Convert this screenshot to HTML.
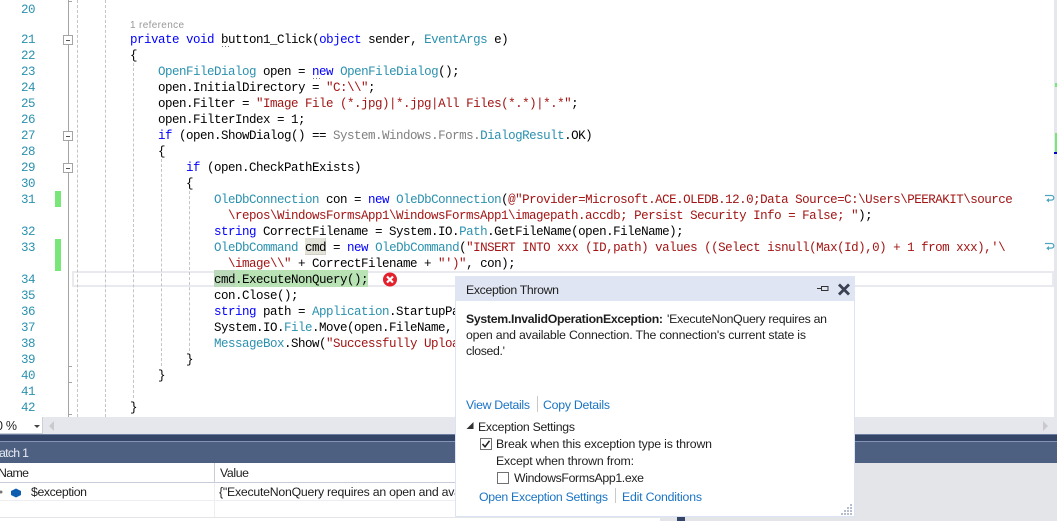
<!DOCTYPE html>
<html><head><meta charset="utf-8"><style>
html,body{margin:0;padding:0;background:#fff}
#r{position:relative;width:1057px;height:521px;overflow:hidden;background:#fff}
.a{position:absolute}
.l{position:absolute;margin-top:1px;height:16px;line-height:16px;white-space:pre;font-family:"Liberation Mono",monospace;font-size:12.5px;letter-spacing:-.5px;color:#000}
.n{position:absolute;margin-top:1px;left:0;width:35px;text-align:right;height:16px;line-height:16px;font-family:"Liberation Mono",monospace;font-size:12.5px;letter-spacing:-.5px;color:#2b91af}
.t{color:#2b91af}.k{color:#00f}.s{color:#a31515}.g{color:#808080}
.d{position:absolute;width:0;border-left:1px dashed #c4c4c4}
.b{position:absolute;left:63px;width:8px;height:8px;border:1px solid #a5a5a5;background:#fff}
.b:after{content:"";position:absolute;left:2px;top:3.5px;width:4px;height:1px;background:#555}
svg text{font-family:"Liberation Sans",sans-serif;font-size:12.3px;fill:#1e1e1e}
</style></head><body><div id="r">

<div class="a" style="left:72px;top:271px;width:978px;height:12px;border:2px solid #e9e9f0"></div>
<div class="a" style="left:214px;top:270px;width:21px;height:17px;background:#bcdabb"></div>
<div class="a" style="left:235px;top:270px;width:133px;height:17px;background:#b9e2b5"></div>
<div class="a" style="left:305px;top:238px;width:20px;height:16px;background:#e3e3d9;border:1px solid #cfcfc4;border-width:0 1px 1px 0"></div>

<div class="a" style="left:55px;top:191px;width:6px;height:16px;background:#78e678"></div>
<div class="a" style="left:55px;top:239px;width:6px;height:32px;background:#78e678"></div>
<div class="a" style="left:68px;top:0;width:1px;height:417px;background:#a5a5a5"></div>
<div class="a" style="left:68px;top:1px;width:4px;height:1px;background:#a5a5a5"></div>
<div class="a" style="left:68px;top:366px;width:4px;height:1px;background:#a5a5a5"></div>
<div class="a" style="left:68px;top:382px;width:4px;height:1px;background:#a5a5a5"></div>
<div class="a" style="left:68px;top:414px;width:4px;height:1px;background:#a5a5a5"></div>
<div class="b" style="top:35px"></div>
<div class="b" style="top:131px"></div>
<div class="b" style="top:163px"></div>

<div class="d" style="left:77px;top:0;height:417px"></div>
<div class="d" style="left:105px;top:0;height:417px"></div>
<div class="d" style="left:133px;top:63px;height:335px"></div>
<div class="d" style="left:161px;top:159px;height:207px"></div>
<div class="d" style="left:189px;top:191px;height:160px"></div>

<div class="n" style="top:1px">20</div>
<div class="n" style="top:31px">21</div>
<div class="n" style="top:47px">22</div>
<div class="n" style="top:63px">23</div>
<div class="n" style="top:79px">24</div>
<div class="n" style="top:95px">25</div>
<div class="n" style="top:111px">26</div>
<div class="n" style="top:127px">27</div>
<div class="n" style="top:143px">28</div>
<div class="n" style="top:159px">29</div>
<div class="n" style="top:175px">30</div>
<div class="n" style="top:191px">31</div>
<div class="n" style="top:223px">32</div>
<div class="n" style="top:239px">33</div>
<div class="n" style="top:271px">34</div>
<div class="n" style="top:287px">35</div>
<div class="n" style="top:303px">36</div>
<div class="n" style="top:319px">37</div>
<div class="n" style="top:335px">38</div>
<div class="n" style="top:351px">39</div>
<div class="n" style="top:367px">40</div>
<div class="n" style="top:383px">41</div>
<div class="n" style="top:399px">42</div>

<div class="l" style="left:130px;top:-15px">}</div>
<div class="l" style="left:130px;top:31px"><span class="k">private</span> <span class="k">void</span> button1_Click(<span class="k">object</span> sender, <span class="t">EventArgs</span> e)</div>
<div class="l" style="left:130px;top:47px">{</div>
<div class="l" style="left:158px;top:63px"><span class="t">OpenFileDialog</span> open = <span class="k">new</span> <span class="t">OpenFileDialog</span>();</div>
<div class="l" style="left:158px;top:79px">open.InitialDirectory = <span class="s">"C:\\"</span>;</div>
<div class="l" style="left:158px;top:95px">open.Filter = <span class="s">"Image File (*.jpg)|*.jpg|All Files(*.*)|*.*"</span>;</div>
<div class="l" style="left:158px;top:111px">open.FilterIndex = 1;</div>
<div class="l" style="left:158px;top:127px"><span class="k">if</span> (open.ShowDialog() == <span class="g">System.Windows.Forms.</span><span class="t">DialogResult</span>.OK)</div>
<div class="l" style="left:158px;top:143px">{</div>
<div class="l" style="left:186px;top:159px"><span class="k">if</span> (open.CheckPathExists)</div>
<div class="l" style="left:186px;top:175px">{</div>
<div class="l" style="left:214px;top:191px"><span class="t">OleDbConnection</span> con = <span class="k">new</span> <span class="t">OleDbConnection</span>(<span class="s">@"Provider=Microsoft.ACE.OLEDB.12.0;Data Source=C:\Users\PEERAKIT\source</span></div>
<div class="l" style="left:228px;top:207px"><span class="s">\repos\WindowsFormsApp1\WindowsFormsApp1\imagepath.accdb; Persist Security Info = False; "</span>);</div>
<div class="l" style="left:214px;top:223px"><span class="k">string</span> CorrectFilename = System.IO.<span class="t">Path</span>.GetFileName(open.FileName);</div>
<div class="l" style="left:214px;top:239px"><span class="t">OleDbCommand</span> cmd = <span class="k">new</span> <span class="t">OleDbCommand</span>(<span class="s">"INSERT INTO xxx (ID,path) values ((Select isnull(Max(Id),0) + 1 from xxx),'\</span></div>
<div class="l" style="left:228px;top:255px"><span class="s">\image\\"</span> + CorrectFilename + <span class="s">"')"</span>, con);</div>
<div class="l" style="left:214px;top:271px">cmd.ExecuteNonQuery();</div>
<div class="l" style="left:214px;top:287px">con.Close();</div>
<div class="l" style="left:214px;top:303px"><span class="k">string</span> path = <span class="t">Application</span>.StartupPath;</div>
<div class="l" style="left:214px;top:319px">System.IO.<span class="t">File</span>.Move(open.FileName, path);</div>
<div class="l" style="left:214px;top:335px"><span class="t">MessageBox</span>.Show(<span class="s">"Successfully Upload"</span>);</div>
<div class="l" style="left:186px;top:351px">}</div>
<div class="l" style="left:158px;top:367px">}</div>
<div class="l" style="left:130px;top:399px">}</div>

<div class="a" style="left:0;top:417px;width:1057px;height:17px;background:#e6e7ed"></div>
<div class="a" style="left:0;top:417px;width:42px;height:16px;background:#fff;border-bottom:1px solid #ccced8;border-right:1px solid #ccced8"></div>
<div class="a" style="left:1054px;top:0;width:3px;height:417px;background:#e6e7ed"></div>
<div class="a" style="left:1055px;top:83px;width:2px;height:4px;background:#78e678"></div>
<div class="a" style="left:1055px;top:133px;width:2px;height:19px;background:#78e678"></div>
<div class="a" style="left:1054px;top:152px;width:3px;height:2px;background:#0000d0"></div>

<div class="a" style="left:0;top:434px;width:1057px;height:7px;background:#344567;border-top:1px solid #6c7ea0;box-sizing:border-box"></div>
<div class="a" style="left:0;top:441px;width:1057px;height:22px;background:#4d6082;border-top:1px solid #8494b4;box-sizing:border-box"></div>
<div class="a" style="left:855px;top:463px;width:202px;height:58px;background:#e4e5e8"></div>
<div class="a" style="left:0;top:482px;width:660px;height:1px;background:#c8cbd8"></div>
<div class="a" style="left:0;top:500px;width:660px;height:1px;background:#eeeef2"></div>
<div class="a" style="left:214px;top:463px;width:1px;height:19px;background:#c8cbd8"></div>
<div class="a" style="left:214px;top:483px;width:1px;height:34px;background:#eeeef2"></div>
<div class="a" style="left:0;top:517px;width:660px;height:1px;background:#e4e5e8"></div>
<div class="a" style="left:660px;top:517px;width:397px;height:4px;background:#e4e5e8"></div>
<div class="a" style="left:677px;top:517px;width:8px;height:4px;background:#344567"></div>

<svg class="a" style="left:0;top:0" width="1057" height="521">
<text x="130" y="28" textLength="54" style="font-size:10px;fill:#999">1 reference</text>
<g fill="#777"><rect x="222" y="46" width="1" height="1"/><rect x="225" y="46" width="1" height="1"/><rect x="228" y="46" width="1" height="1"/><rect x="313" y="78" width="1" height="1"/><rect x="316" y="78" width="1" height="1"/><rect x="319" y="78" width="1" height="1"/></g>
<circle cx="390" cy="279.5" r="7" fill="#e3202c"/>
<path d="M387 276.5l6 6M393 276.5l-6 6" stroke="#fff" stroke-width="2.2"/>
<g fill="none" stroke="#4ea5c4" stroke-width="1.3"><path d="M1045 195.5h6.5a2.3 2.3 0 0 1 0 4.6h-4"/><path d="M1045 243.5h6.5a2.3 2.3 0 0 1 0 4.6h-4"/></g>
<path d="M1049 198v4.5l-2.8-2.2zM1049 246v4.5l-2.8-2.2z" fill="#4ea5c4"/>
<text x="-4" y="430" textLength="21" style="font-size:12.5px">0 %</text>
<path d="M34 425h6l-3 3z" fill="#444"/>
<path d="M54 421v10l-5-5z" fill="#c9c9ce"/>
<path d="M1043 421v10l5-5z" fill="#c9c9ce"/>
<text x="-1" y="457" textLength="30" style="fill:#e8ebf2">atch 1</text>
<text x="-2" y="477" textLength="31">Name</text>
<text x="220" y="477" textLength="29">Value</text>
<circle cx="1" cy="492" r="1.5" fill="#777"/>
<path d="M11 491l5-2.5 5 2.5v4l-5 2.5-5-2.5z" fill="#0f5fb0"/>
<text x="31" y="496" textLength="56">$exception</text>
<text x="219" y="496" textLength="242">{"ExecuteNonQuery requires an open and ava</text>
</svg>

<div class="a" style="left:455px;top:276px;width:400px;height:241px;background:#fff;border:1px solid #dbe3f5;box-sizing:border-box"></div>
<div class="a" style="left:455px;top:276px;width:400px;height:25px;background:#dfe5f2"></div>
<div class="a" style="left:537px;top:396px;width:1px;height:16px;background:#c9c9c9"></div>
<div class="a" style="left:615px;top:488px;width:1px;height:15px;background:#c9c9c9"></div>

<svg class="a" style="left:0;top:0" width="1057" height="521">
<text x="466" y="294" textLength="93">Exception Thrown</text>
<path d="M817 288.5h4M821.5 286.5h6.5v4h-6.5z" fill="none" stroke="#333" stroke-width="1"/>
<path d="M839 284.5l10 10M849 284.5l-10 10" stroke="#3b4152" stroke-width="2.8"/>
<text x="466" y="323" textLength="197" style="font-weight:bold">System.InvalidOperationException:</text>
<text x="667" y="323" textLength="160">'ExecuteNonQuery requires an</text>
<text x="466" y="339" textLength="340">open and available Connection. The connection's current state is</text>
<text x="466" y="355" textLength="39">closed.'</text>
<text x="466" y="409" textLength="64" style="fill:#1a74c4">View Details</text>
<text x="543" y="409" textLength="67" style="fill:#1a74c4">Copy Details</text>
<path d="M473.5 422v7h-7z" fill="#333"/>
<text x="478" y="431" textLength="97">Exception Settings</text>
<rect x="480.5" y="438.5" width="11" height="11" fill="#fff" stroke="#707070"/>
<path d="M482.5 444l2.5 2.8 4.5-6" fill="none" stroke="#222" stroke-width="1.6"/>
<text x="496" y="448" textLength="216">Break when this exception type is thrown</text>
<text x="496" y="465" textLength="138">Except when thrown from:</text>
<rect x="497.5" y="472.5" width="11" height="11" fill="#fff" stroke="#707070"/>
<text x="514" y="482" textLength="130">WindowsFormsApp1.exe</text>
<text x="479" y="501" textLength="129" style="fill:#1a74c4">Open Exception Settings</text>
<text x="622" y="501" textLength="80" style="fill:#1a74c4">Edit Conditions</text>
<g fill="#b6bccb"><rect x="850" y="504" width="2" height="2"/><rect x="847" y="507" width="2" height="2"/><rect x="850" y="507" width="2" height="2"/><rect x="844" y="510" width="2" height="2"/><rect x="847" y="510" width="2" height="2"/><rect x="850" y="510" width="2" height="2"/><rect x="841" y="513" width="2" height="2"/><rect x="844" y="513" width="2" height="2"/><rect x="847" y="513" width="2" height="2"/><rect x="850" y="513" width="2" height="2"/></g>
</svg>
</div></body></html>
